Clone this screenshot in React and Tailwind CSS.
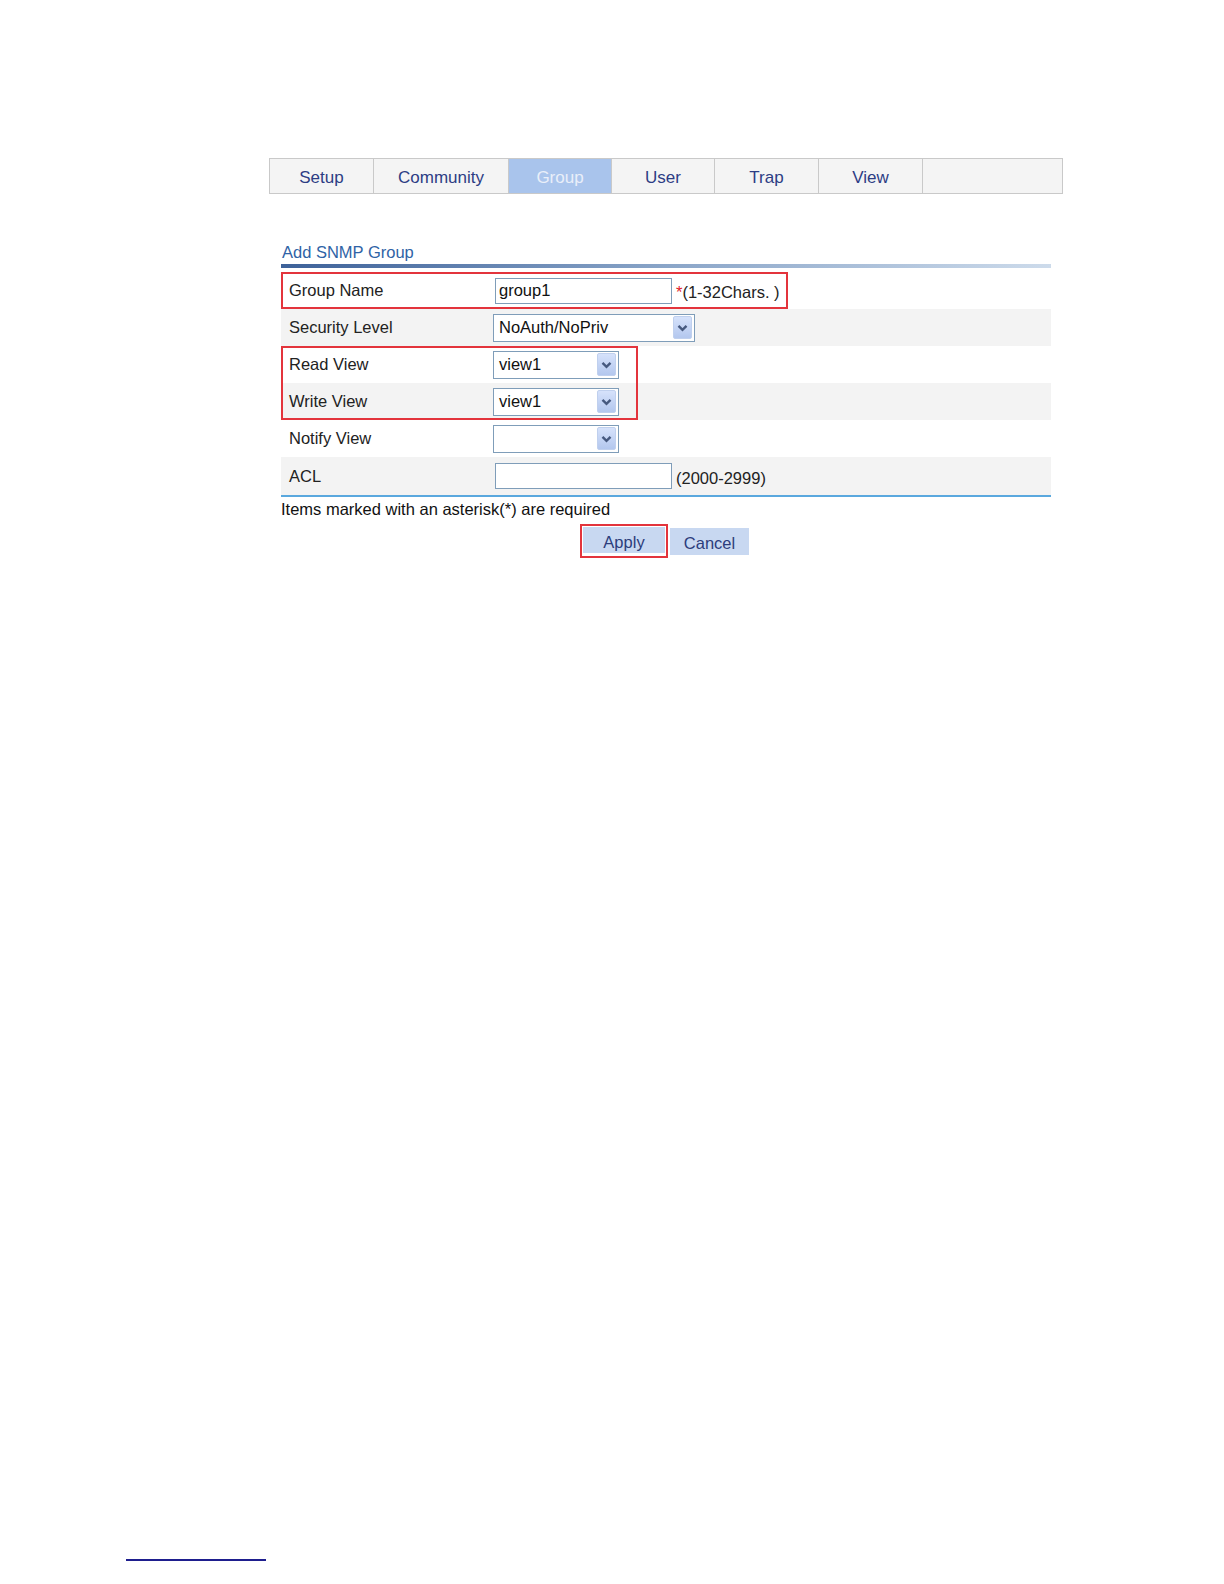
import React from "react";

const tabs = [
  { label: "Setup", w: "w-[103px]" },
  { label: "Community", w: "w-[135px]" },
  { label: "Group", w: "w-[103px]", active: true },
  { label: "User", w: "w-[103px]" },
  { label: "Trap", w: "w-[104px]" },
  { label: "View", w: "w-[104px]" },
  { label: "", w: "flex-1" },
];

const Chevron = () => (
  <svg width="11" height="8" viewBox="0 0 11 8">
    <polyline points="1.5,1.8 5.5,5.8 9.5,1.8" fill="none" stroke="#46597f" strokeWidth="2.4" />
  </svg>
);

const Select = ({ value, width }) => (
  <div className={`flex items-center h-[28px] border border-[#7f9db9] bg-white ${width}`}>
    <span className="flex-1 pl-[5px] text-[16.5px] text-[#111]">{value}</span>
    <span className="flex items-center justify-center w-[19px] h-[23px] mr-[2px] rounded-[2px] bg-gradient-to-b from-[#d6e2fb] to-[#b3c7ee] border border-[#c0d0ee]">
      <Chevron />
    </span>
  </div>
);

const TextInput = ({ value }) => (
  <div className="flex items-center h-[26px] w-[177px] border border-[#7f9db9] bg-white ml-[2px] pl-[3px] text-[16.5px] text-[#111]">
    {value}
  </div>
);

const Row = ({ label, gray, children, tall }) => (
  <div className={`flex items-center ${tall ? "h-[38px]" : "h-[37px]"} ${gray ? "bg-[#f3f3f3]" : "bg-white"}`}>
    <div className="w-[212px] pl-[8px] text-[16.5px] text-[#222]">{label}</div>
    {children}
  </div>
);

export default function App() {
  return (
    <div className="flex flex-col w-[1224px] h-[1584px] bg-white font-['Liberation_Sans',Arial,sans-serif]">
      {/* tab strip */}
      <div className="mt-[158px] ml-[269px] w-[794px] h-[36px] flex border border-[#c9c9c9] bg-[#f4f4f4]">
        {tabs.map((t, i) => (
          <div
            key={i}
            className={`${t.w} flex items-center justify-center pt-[4px] text-[17px] ${
              i > 0 ? "border-l border-[#c9c9c9]" : ""
            } ${t.active ? "bg-[#a9c4ec] text-[#e9eff9]" : "text-[#2d3d84]"}`}
          >
            {t.label}
          </div>
        ))}
      </div>

      {/* form */}
      <div className="ml-[281px] w-[770px] mt-[46px]">
        <div className="h-[20px] leading-[20px] pt-[2px] pl-[1px] text-[16.5px] text-[#2f63a6]">Add SNMP Group</div>
        <div className="mt-[4px] h-[4px] bg-gradient-to-r from-[#3d6199] via-[#8aa5c8] to-[#cddbeb]" />

        <div className="relative mt-[4px]">
          <Row label="Group Name">
            <TextInput value="group1" />
            <span className="ml-[4px] text-[16.5px] text-[#222] pt-[4px]">
              <span className="text-[#e0202a]">*</span>(1-32Chars. )
            </span>
          </Row>
          <Row label="Security Level" gray>
            <Select value="NoAuth/NoPriv" width="w-[202px]" />
          </Row>
          <Row label="Read View">
            <Select value="view1" width="w-[126px]" />
          </Row>
          <Row label="Write View" gray>
            <Select value="view1" width="w-[126px]" />
          </Row>
          <Row label="Notify View">
            <Select value="" width="w-[126px]" />
          </Row>
          <Row label="ACL" gray tall>
            <TextInput value="" />
            <span className="ml-[4px] text-[16.5px] text-[#222] pt-[4px]">(2000-2999)</span>
          </Row>

          {/* red highlight outlines */}
          <div className="absolute left-0 top-0 w-[507px] h-[37px] border-2 border-[#e3343c] pointer-events-none" />
          <div className="absolute left-0 top-[74px] w-[357px] h-[74px] border-2 border-[#e3343c] pointer-events-none" />
        </div>

        <div className="h-[2px] bg-[#5aa8de]" />
        <div className="h-[20px] leading-[20px] mt-[2px] text-[16.5px] text-[#111]">
          Items marked with an asterisk(*) are required
        </div>

        <div className="flex items-center mt-[5px] pl-[299px]">
          <div className="border-2 border-[#e3343c] p-[1px]">
            <button className="w-[82px] h-[26px] bg-[#c8d8f1] text-[16.5px] text-[#2c3d7c] pt-[3px]">Apply</button>
          </div>
          <button className="ml-[2px] w-[79px] h-[27px] bg-[#c8d8f1] text-[16.5px] text-[#2c3d7c] pt-[3px]">Cancel</button>
        </div>
      </div>

      {/* footer rule */}
      <div className="mt-auto mb-[23px] ml-[126px] w-[140px] h-[2px] bg-[#1e1e8e]" />
    </div>
  );
}
